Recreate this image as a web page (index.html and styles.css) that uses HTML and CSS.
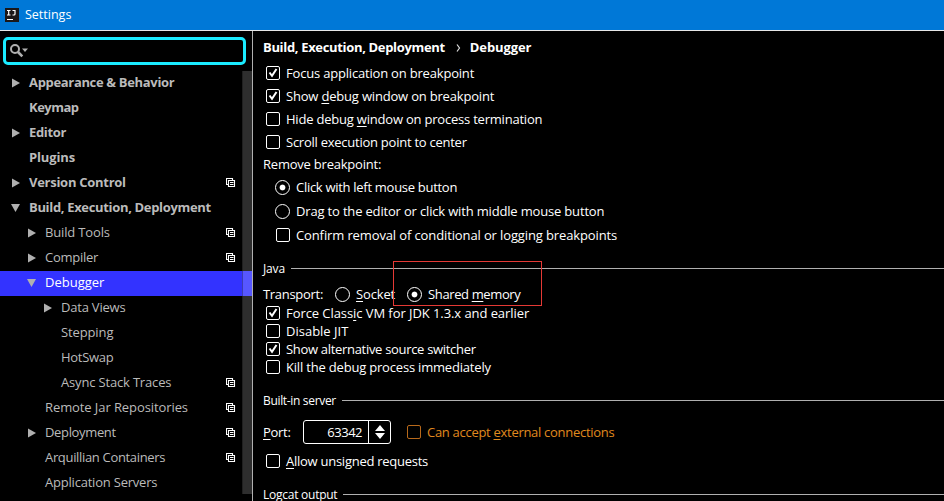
FILE: index.html
```html
<!DOCTYPE html>
<html lang="en">
<head>
<meta charset="utf-8">
<title>Settings</title>
<link rel="stylesheet" href="styles.css">
</head>
<body>
<svg class="defs" width="0" height="0">
  <symbol id="right" viewBox="0 0 9 10"><path d="M1 .5 9 5 1 9.5z" fill="#b0b0b0"/></symbol>
  <symbol id="down" viewBox="0 0 9 10"><path d="M0 1h9L4.5 9z" fill="#b0b0b0"/></symbol>
  <symbol id="copy" viewBox="0 0 10 10"><path d="M2.5 6.5h-2v-6h6v2M2.5 2.5h6v6h-6zM4 4.500h3.500M4 6.500h3.500" fill="none" stroke="#fff" stroke-width="1.100"/></symbol>
  <symbol id="check" viewBox="0 0 14 14"><path d="m3.500 6.500 2.500 3.300L10.500 3" fill="none" stroke="#fff" stroke-width="2"/></symbol>
</svg>
<header class="titlebar">
  <svg class="logo" width="14" height="14" viewBox="0 0 14 14"><rect width="14" height="14" fill="#1b1718"/><path d="M2 2.500h3.500M3.700 2.500v4.500M2 7h3.500M7.500 2.500h2.500v3.500q0 1-1 1H7.500M2 11.500h6" fill="none" stroke="#fff" stroke-width="1.200"/></svg>
  <span>Settings</span>
</header>
<div class="main">
  <aside class="sidebar">
    <div class="search"><svg width="20" height="14" viewBox="0 0 20 14"><circle cx="5" cy="5" r="4" fill="none" stroke="#b0b0b0" stroke-width="2"/><path d="m8 8 4.300 4.300" stroke="#b0b0b0" stroke-width="2.600"/><path d="M12 4.500h6l-3 3.500z" fill="#b0b0b0"/></svg></div>
    <div class="treewrap">
    <ul class="tree">
      <li class="top"><svg class="arrow"><use href="#right"/></svg><span class="t1">Appearance &amp; Behavior</span></li>
      <li class="top"><i class="arrow"></i><span class="t2">Keymap</span></li>
      <li class="top"><svg class="arrow"><use href="#right"/></svg><span class="t3">Editor</span></li>
      <li class="top"><i class="arrow"></i><span class="t4">Plugins</span></li>
      <li class="top"><svg class="arrow"><use href="#right"/></svg><span class="t5">Version Control</span><svg class="copy"><use href="#copy"/></svg></li>
      <li class="top"><svg class="arrow"><use href="#down"/></svg><span class="t6">Build, Execution, Deployment</span></li>
      <li class="sub"><svg class="arrow"><use href="#right"/></svg><span class="t7">Build Tools</span><svg class="copy"><use href="#copy"/></svg></li>
      <li class="sub"><svg class="arrow"><use href="#right"/></svg><span class="t8">Compiler</span><svg class="copy"><use href="#copy"/></svg></li>
      <li class="sub selected"><svg class="arrow"><use href="#down"/></svg><span class="t9">Debugger</span></li>
      <li class="leaf"><svg class="arrow"><use href="#right"/></svg><span class="t10">Data Views</span></li>
      <li class="leaf"><i class="arrow"></i><span class="t11">Stepping</span></li>
      <li class="leaf"><i class="arrow"></i><span class="t12">HotSwap</span></li>
      <li class="leaf"><i class="arrow"></i><span class="t13">Async Stack Traces</span><svg class="copy"><use href="#copy"/></svg></li>
      <li class="sub"><i class="arrow"></i><span class="t14">Remote Jar Repositories</span><svg class="copy"><use href="#copy"/></svg></li>
      <li class="sub"><svg class="arrow"><use href="#right"/></svg><span class="t15">Deployment</span><svg class="copy"><use href="#copy"/></svg></li>
      <li class="sub"><i class="arrow"></i><span class="t16">Arquillian Containers</span><svg class="copy"><use href="#copy"/></svg></li>
      <li class="sub"><i class="arrow"></i><span class="t17">Application Servers</span></li>
    </ul>
    <div class="scrollbar"></div>
    </div>
  </aside>
  <main class="content">
    <h1><span class="c1">Build, Execution, Deployment</span><svg class="chev" width="5" height="8" viewBox="0 0 5 8"><path d="m1 .5 2.500 3.500L1 7.500" fill="none" stroke="#ddd" stroke-width="1.200"/></svg><span class="c2">Debugger</span></h1>
    <div class="row"><span class="box"><svg><use href="#check"/></svg></span><span class="c3">Focus application on breakpoint</span></div>
    <div class="row"><span class="box"><svg><use href="#check"/></svg></span><span class="c4">Show <u>d</u>ebug window on breakpoint</span></div>
    <div class="row"><span class="box"></span><span class="c5">Hide debug <u>w</u>indow on process termination</span></div>
    <div class="row"><span class="box"></span><span class="c6">Scroll execution point to center</span></div>
    <div class="label"><span class="c7">Remove breakpoint:</span></div>
    <div class="row inner"><span class="radio on"></span><span class="c8">Click with left mouse button</span></div>
    <div class="row inner"><span class="radio"></span><span class="c9">Drag to the editor or click with middle mouse button</span></div>
    <div class="row inner"><span class="box"></span><span class="c10">Confirm removal of conditional or logging breakpoints</span></div>
    <div class="section java"><span class="c11">Java</span><hr></div>
    <div class="transport"><span class="c12">Transport:</span><span class="radio"></span><span class="c13"><u>S</u>ocket</span><span class="radio on second"></span><span class="c14">Shared <u>m</u>emory</span><div class="highlight"></div></div>
    <div class="row tight"><span class="box"><svg><use href="#check"/></svg></span><span class="c15">Force Class<u>i</u>c VM for JDK 1.3.x and earlier</span></div>
    <div class="row tight"><span class="box"></span><span class="c16">Disable JIT</span></div>
    <div class="row tight"><span class="box"><svg><use href="#check"/></svg></span><span class="c17">Show alternative source switcher</span></div>
    <div class="row tight"><span class="box"></span><span class="c18">Kill the debug process immediately</span></div>
    <div class="section server"><span class="c19">Built-in server</span><hr></div>
    <div class="port"><span class="portlabel c20"><u>P</u>ort:</span><div class="spinner"><span class="value c21">63342</span><span class="steps"><svg width="10" height="14" viewBox="0 0 10 14"><path d="M0 6 5 0l5 6zM0 8h10l-5 6z" fill="#fff"/></svg></span></div><span class="box orange"></span><span class="accept c22">Can accept <u>e</u>xternal connections</span></div>
    <div class="row allow"><span class="box"></span><span class="c23"><u>A</u>llow unsigned requests</span></div>
    <div class="section logcat"><span class="c24">Logcat output</span><hr></div>
  </main>
</div>
</body>
</html>
```
FILE: styles.css
```css
* { box-sizing: border-box; }
body { margin: 0; width: 944px; height: 501px; overflow: hidden; background: #000; color: #fff; font: 13px/18px "Open Sans", sans-serif; display: flex; flex-direction: column; }
.defs { position: absolute; }
span { white-space: nowrap; }
u { text-decoration-thickness: 1px; text-underline-offset: 2px; }
.titlebar { height: 31px; flex: none; background: #0078d7; border-bottom: 1px solid #e8e8e8; display: flex; align-items: center; padding-left: 5px; gap: 6px; font-size: 12.500px; }
.logo { display: block; }
.main { flex: 1; min-height: 0; display: flex; }
.sidebar { width: 253px; flex: none; border-right: 1px solid #b0b0b0; color: #bbb; padding-top: 6px; }
.search { width: 243px; height: 28px; margin-left: 3px; border: 3px solid #1aebff; border-radius: 5px; padding: 4px 0 0 4px; }
.search svg, .copy, .arrow { display: block; }
.treewrap { display: flex; margin-top: 6px; position: relative; }
.tree { list-style: none; margin: 0; padding: 0; width: 252px; }
.tree li { height: 25px; display: flex; align-items: center; padding: 0 0 1px 11px; }
.tree li span { margin-bottom: 3px; }
.tree li.sub { padding-left: 27px; }
.tree li.leaf { padding-left: 43px; }
.tree .top { font-weight: 700; }
.tree .selected { background: #3333ff; color: #fff; }
.arrow { width: 9px; height: 10px; margin-right: 9px; flex: none; }
.copy { width: 10px; height: 10px; margin: 0 16px 0 auto; flex: none; }
.scrollbar { position: absolute; left: 242px; top: 0; width: 10px; height: 423px; background: rgba(255,255,255,.18); border-left: 1px solid rgba(0,0,0,.3); }
.content { flex: 1; padding: 7px 0 0 10px; overflow: hidden; }
h1 { margin: 0; font-size: 13px; font-weight: 700; line-height: 18px; height: 23px; display: flex; }
.chev { margin: 6px 9px 0 11px; }
.row { height: 23px; display: flex; align-items: center; padding-left: 3px; }
.box { width: 14px; height: 14px; border: 1px solid #fff; border-radius: 2px; margin-right: 6px; flex: none; }
.box svg { display: block; width: 14px; height: 14px; margin: -1px; }
.label { height: 22px; padding-bottom: 1px; display: flex; align-items: center; }
.inner { padding-left: 12px; height: 24px; }
.inner .box { margin-left: 1px; }
.radio { width: 15px; height: 15px; border: 1px solid #fff; border-radius: 50%; margin-right: 6px; flex: none; }
.on { background: radial-gradient(circle, #fff 2.500px, transparent 3.300px); }
.section { display: flex; align-items: center; height: 18px; font-size: 12px; }
.section span { margin: 1px 0 -1px; }
.section hr { flex: 1; border: 0; border-top: 1px solid #b0b0b0; margin: 0 0 0 6px; }
.java { margin-top: 12px; }
.transport { display: flex; align-items: center; height: 20px; position: relative; margin-top: 7px; }
.transport .radio { margin-left: 12px; }
.highlight { position: absolute; left: 130px; top: -23px; width: 149px; height: 45px; border: 1px solid #e53935; }
.tight { height: 18px; }
.server { margin-top: 15px; }
.port { display: flex; align-items: center; height: 24px; margin-top: 11px; }
.portlabel { width: 40px; }
.spinner { width: 88px; height: 24px; border: 1px solid #fff; border-radius: 3px; display: flex; margin-right: 16px; }
.value { width: 65px; text-align: right; padding-right: 6px; line-height: 22px; border-right: 1px solid #fff; }
.steps { flex: 1; display: flex; align-items: center; justify-content: center; }
.orange { border-color: #b8691a; }
.accept { color: #e08a1e; }
.allow { height: 24px; margin-top: 5px; }
.logcat { margin-top: 12px; }

/* Tracking per label */
.t1, .t16 { letter-spacing: -.33px; }
.t2 { letter-spacing: -.5px; }
.t3, .t15 { letter-spacing: -.35px; }
.t4, .t7 { letter-spacing: -.15px; }
.t5 { letter-spacing: -.27px; }
.t6, .c1 { letter-spacing: -.33px; }
.t8 { letter-spacing: -.25px; }
.t10, .t17 { letter-spacing: -.21px; }
.t11 { letter-spacing: -.12px; }
.t12 { letter-spacing: -.3px; }
.t13 { letter-spacing: -.17px; }
.t14 { letter-spacing: -.09px; }
.c2, .c10 { letter-spacing: -.12px; }
.c3, .c4, .c18 { letter-spacing: -.19px; }
.c5 { letter-spacing: -.21px; }
.c6, .c24 { letter-spacing: -.25px; }
.c7 { letter-spacing: -.22px; }
.c8, .c22 { letter-spacing: -.29px; }
.c9 { letter-spacing: -.17px; }
.c11 { letter-spacing: -.15px; }
.c12 { letter-spacing: -.3px; }
.c13 { letter-spacing: -.15px; }
.c14 { letter-spacing: -.38px; }
.c15 { letter-spacing: -.07px; }
.c17 { letter-spacing: -.31px; }
.c19 { letter-spacing: -.33px; }
.c20 { letter-spacing: -.3px; }
.c21 { letter-spacing: -.5px; }
.c23 { letter-spacing: -.26px; }
```
